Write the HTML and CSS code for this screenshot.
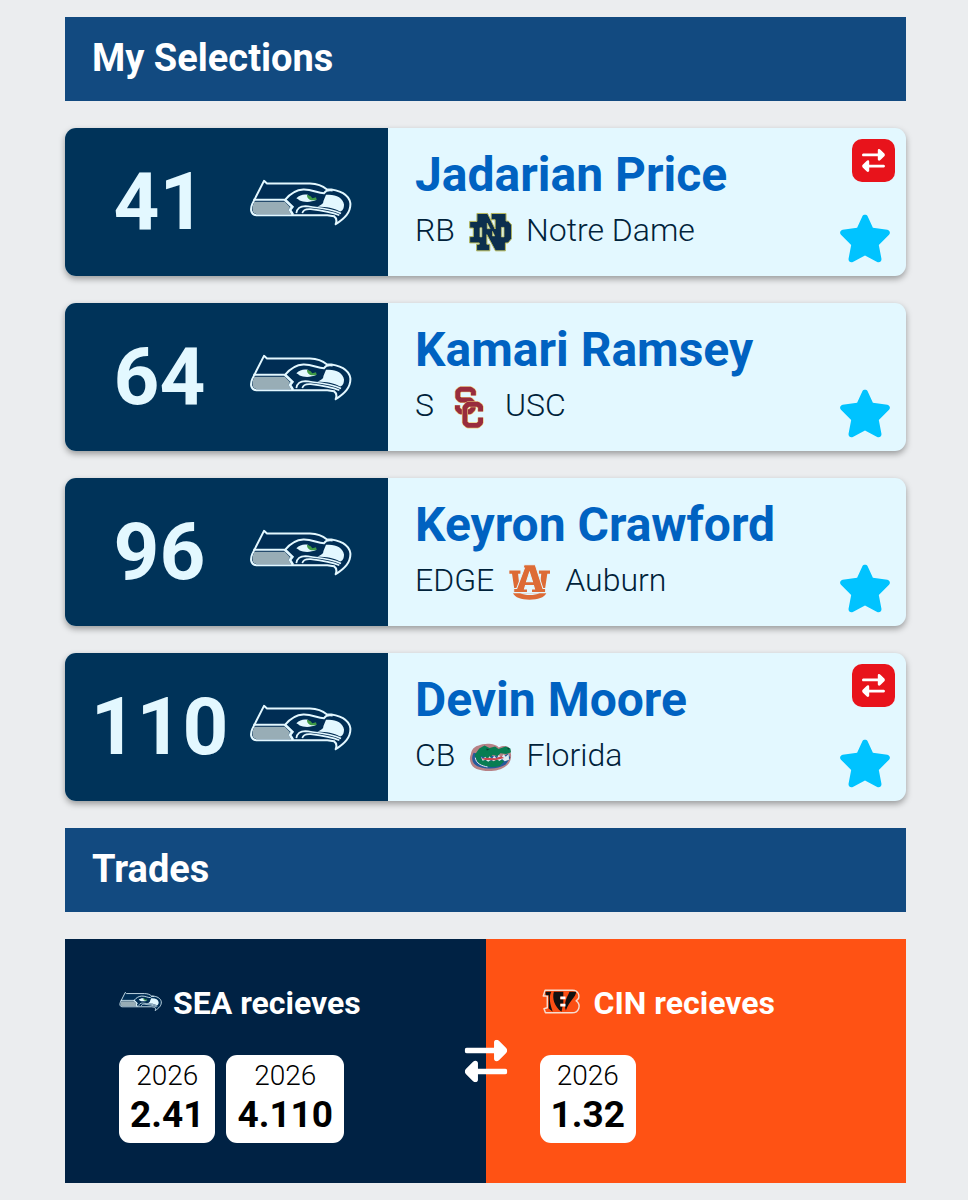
FILE: index.html
```
<!DOCTYPE html>
<html lang="en">
<head>
    <meta charset="UTF-8">
    <meta name="viewport" content="width=device-width, initial-scale=1.0">
    <title>My Selections</title>
    <link rel="stylesheet" href="styles.css">
</head>
<body>
    <!-- Shared icons and team logos -->
    <svg class="sprite" aria-hidden="true">
        <symbol id="sea" viewBox="27 40 309 140">
            <path d="M72 45L81 53H210C236 54 248 60 260 70C300 71 327 87 331 112C333 140 313 158 287 175C291 165 290 157 282 151L262 148H48C32 145 30 130 37 114Z" fill="#002d54" stroke="#e3f8ff" stroke-width="6" stroke-linejoin="round"/>
            <path d="M43 108H134L150 124L145 131L153 145H50C37 142 36 130 39 119Z" fill="#98adb6"/>
            <path d="M40 102H135C151 83 170 72 190 71C216 70 232 82 252 82C257 74 267 72 278 74" fill="none" stroke="#e3f8ff" stroke-width="6"/>
            <path d="M134 101L157 123L150 132L159 147" fill="none" stroke="#e3f8ff" stroke-width="8"/>
            <path d="M258 87C286 84 309 95 312 116C312 128 308 136 300 137C282 126 260 123 232 122C246 117 251 111 250 106Z" fill="#e3f8ff"/>
            <path d="M169 97C180 87 191 84 204 87C206 98 217 103 230 102C211 111 190 109 179 104C176 101 173 99 169 97Z" fill="#e3f8ff"/>
            <path d="M201 87L212 91L217 97L228 94L230 102C213 107 200 100 201 87Z" fill="#3f9b45"/>
            <path d="M169 142C171 128 181 121 196 121C234 126 273 128 303 143M187 142C189 132 198 129 212 130C245 134 270 137 298 148" fill="none" stroke="#e3f8ff" stroke-width="5"/>
        </symbol>
        <symbol id="cin" viewBox="20 37 118 66">
            <path d="M34 39H109C127 39 133 60 119 68C135 80 126 101 108 101H35L31 90L40 87V55H29Z" fill="#fb4f14" stroke="#f6ddd0" stroke-width="4" stroke-linejoin="round"/>
            <path d="M35 43H51C43 58 48 78 55 98L44 89V53H36ZM58 43H84V57H75V64H84V76H75V83H82L79 98C59 83 53 62 58 43ZM101 43H119C119 58 100 68 91 95C84 74 94 59 101 43Z" fill="#111"/>
            <path d="M76 56H90V64H76ZM76 76H90V84H76Z" fill="#fff"/>
        </symbol>
        <symbol id="nd" viewBox="27 40 130 117">
            <path d="M51 41H83L106 88V60H94V41H139V64H146L156 76V117L145 130H137V154H107L81 105V134H90V154H50V134H58V130H29V111H40V85H29V65H51Z" fill="#0c2f4e" stroke="#b7b85a" stroke-width="3"/>
            <path d="M60 84H66V112H60ZM125 83H133V112H125ZM82 70L91 87H82ZM105 109L98 95V109Z" fill="#d8edd7" stroke="#b7b85a" stroke-width="2"/>
        </symbol>
        <symbol id="usc" viewBox="28 18 92 132">
            <g fill="none" stroke-linejoin="bevel">
                <path d="M86 47V34L77 28H46L38 35V53L46 61H76L85 70V88L76 97H46L37 88V77" stroke="#efca78" stroke-width="19"/>
                <path d="M86 47V34L77 28H46L38 35V53L46 61H76L85 70V88L76 97H46L37 88V77" stroke="#982c3d" stroke-width="15"/>
                <path d="M108 96V81L99 74H69L60 84V131L69 139H99L108 131V115" stroke="#efca78" stroke-width="19"/>
                <path d="M108 96V81L99 74H69L60 84V131L69 139H99L108 131V115" stroke="#982c3d" stroke-width="15"/>
            </g>
        </symbol>
        <symbol id="auburn" viewBox="26 30 128 106">
            <path d="M30 47H63V57H56L61 104H45L38 57H30ZM118 47H151V57H143L136 104H120L125 57H118Z" fill="#dd6b35"/>
            <path d="M41 115H140C134 128 115 134 90 134C65 134 47 128 41 115Z" fill="#dd6b35"/>
            <path d="M62 115H120C105 122 77 122 62 115Z" fill="#e3f8ff"/>
            <path d="M74 30H107L130 101H138V113H96V102H105L102 92H78L75 102H84V113H43V101H52L75 40H71ZM90 53L81 81H99Z" fill="#dd6b35" stroke="#e3f8ff" stroke-width="3" fill-rule="evenodd"/>
        </symbol>
        <symbol id="florida" viewBox="26 29 130 87">
            <path d="M53 37C70 28 105 28 116 42C136 32 153 40 151 55C157 69 151 91 138 98C116 117 73 116 49 107C31 100 24 78 32 61C34 48 43 39 53 37Z" fill="#b78186"/>
            <path d="M40 58C30 78 38 96 58 101C83 109 114 108 137 94L151 73L144 61L126 70L80 66Z" fill="#255a9b"/>
            <path d="M57 45L73 36L88 44L105 39L115 47L137 39L151 45L153 57L138 62L121 60L112 69L98 64L87 76L61 68L65 80L95 82L117 77L133 84L119 98C91 105 60 99 51 85L43 65Z" fill="#087d52"/>
            <path d="M62 70L69 77L75 70L82 78L88 69L95 78L102 67L110 76L116 65L124 72L131 63L137 70L146 62L147 79L134 84L126 77L118 83L110 78L101 84L93 79L84 85L76 79L67 82Z" fill="#ddecf0"/>
            <path d="M63 76L78 73L106 75L123 69L132 74L106 81L75 80Z" fill="#ca4750"/>
            <path d="M78 45L88 48L80 51ZM142 43L148 45L144 49Z" fill="#083e30"/>
            <path d="M45 73C47 91 65 98 82 101" fill="none" stroke="#e5e5ee" stroke-width="3"/>
        </symbol>
        <symbol id="swap" viewBox="41 191 131 131">
            <path d="M48 216H131V199C131 191 140 189 146 195L168 217C172 221 172 228 168 232L146 254C140 260 131 258 131 250V233H48C39 233 39 216 48 216ZM165 280H82V263C82 255 73 253 67 259L45 281C41 285 41 292 45 296L67 318C73 324 82 322 82 314V297H165C174 297 174 280 165 280Z" fill="currentColor"/>
        </symbol>
        <symbol id="star" viewBox="29 280 152 147">
            <path d="M97 286C100 280 110 280 113 286L129 321L173 327C181 329 183 337 178 342L147 373L155 415C156 423 149 428 142 425L105 405L68 425C61 428 54 423 55 415L63 373L32 342C27 337 29 329 37 327L81 321Z" fill="currentColor"/>
        </symbol>
    </svg>

    <main class="page">
        <h2 class="section-title">My Selections</h2>

        <article class="pick">
            <div class="pick-slot">
                <span class="pick-number">41</span>
                <svg class="team-logo" role="img" aria-label="Seattle"><use href="#sea"/></svg>
            </div>
            <div class="pick-info">
                <h3 class="player-name">Jadarian Price</h3>
                <div class="player-meta">
                    <span>RB</span>
                    <svg class="school-logo" aria-hidden="true"><use href="#nd"/></svg>
                    <span>Notre Dame</span>
                </div>
            </div>
            <div class="pick-actions">
                <button class="trade-button" aria-label="View trade"><svg><use href="#swap"/></svg></button>
                <button class="star-button" aria-label="Favorite"><svg><use href="#star"/></svg></button>
            </div>
        </article>

        <article class="pick">
            <div class="pick-slot">
                <span class="pick-number">64</span>
                <svg class="team-logo" role="img" aria-label="Seattle"><use href="#sea"/></svg>
            </div>
            <div class="pick-info">
                <h3 class="player-name">Kamari Ramsey</h3>
                <div class="player-meta">
                    <span>S</span>
                    <svg class="school-logo" aria-hidden="true"><use href="#usc"/></svg>
                    <span>USC</span>
                </div>
            </div>
            <div class="pick-actions">
                <button class="star-button" aria-label="Favorite"><svg><use href="#star"/></svg></button>
            </div>
        </article>

        <article class="pick">
            <div class="pick-slot">
                <span class="pick-number">96</span>
                <svg class="team-logo" role="img" aria-label="Seattle"><use href="#sea"/></svg>
            </div>
            <div class="pick-info">
                <h3 class="player-name">Keyron Crawford</h3>
                <div class="player-meta">
                    <span>EDGE</span>
                    <svg class="school-logo" aria-hidden="true"><use href="#auburn"/></svg>
                    <span>Auburn</span>
                </div>
            </div>
            <div class="pick-actions">
                <button class="star-button" aria-label="Favorite"><svg><use href="#star"/></svg></button>
            </div>
        </article>

        <article class="pick">
            <div class="pick-slot">
                <span class="pick-number">110</span>
                <svg class="team-logo" role="img" aria-label="Seattle"><use href="#sea"/></svg>
            </div>
            <div class="pick-info">
                <h3 class="player-name">Devin Moore</h3>
                <div class="player-meta">
                    <span>CB</span>
                    <svg class="school-logo" aria-hidden="true"><use href="#florida"/></svg>
                    <span>Florida</span>
                </div>
            </div>
            <div class="pick-actions">
                <button class="trade-button" aria-label="View trade"><svg><use href="#swap"/></svg></button>
                <button class="star-button" aria-label="Favorite"><svg><use href="#star"/></svg></button>
            </div>
        </article>

        <h2 class="section-title">Trades</h2>

        <section class="trade">
            <div class="trade-side sea">
                <h3 class="trade-team">
                    <svg class="trade-logo" aria-hidden="true"><use href="#sea"/></svg>
                    SEA recieves
                </h3>
                <div class="assets">
                    <div class="asset"><span class="asset-year">2026</span><strong>2.41</strong></div>
                    <div class="asset"><span class="asset-year">2026</span><strong>4.110</strong></div>
                </div>
            </div>
            <div class="trade-side cin">
                <h3 class="trade-team">
                    <svg class="trade-logo" aria-hidden="true"><use href="#cin"/></svg>
                    CIN recieves
                </h3>
                <div class="assets">
                    <div class="asset"><span class="asset-year">2026</span><strong>1.32</strong></div>
                </div>
            </div>
            <svg class="trade-arrows" aria-hidden="true"><use href="#swap"/></svg>
        </section>
    </main>
</body>
</html>
```
FILE: styles.css
```
* {
    box-sizing: border-box;
}

body {
    margin: 0;
    background: #ebedef;
    font-family: Roboto, "Liberation Sans", sans-serif;
    color: #00223a;
}

h2, h3 {
    margin: 0;
}

.sprite {
    display: none;
}

.page {
    display: flex;
    flex-direction: column;
    gap: 27px;
    padding: 17px 62px 16px 65px;
}

.section-title {
    padding: 17px 27px 19px;
    background: #124a80;
    color: #fff;
    font-size: 38px;
    line-height: 48px;
    font-weight: 700;
}

/* Selections */
.pick {
    display: flex;
    min-height: 148px;
    border-radius: 11px;
    overflow: hidden;
    background: #e3f8ff;
    box-shadow: 0 3px 6px rgba(0, 0, 0, 0.35);
}

.pick-slot {
    flex: 0 0 323px;
    display: flex;
    align-items: center;
    padding: 0 36px 0 5px;
    background: #003359;
}

.pick-number {
    flex: 1;
    text-align: center;
    color: #e3f8ff;
    font-size: 80px;
    line-height: 96px;
    font-weight: 700;
}

.team-logo {
    width: 103px;
    height: 47px;
}

.pick-info {
    flex: 1;
    padding: 19px 0 17px 27px;
}

.player-name {
    color: #0062c1;
    font-size: 48px;
    line-height: 56px;
    font-weight: 700;
}

.player-meta {
    display: flex;
    align-items: center;
    gap: 14px;
    height: 54px;
    font-size: 32px;
    font-weight: 300;
}

.school-logo {
    width: 43px;
    height: 43px;
    margin-top: 4px;
}

.pick-actions {
    display: flex;
    flex-direction: column;
    align-items: flex-end;
    padding: 11px;
}

.pick-actions button {
    display: flex;
    align-items: center;
    justify-content: center;
    padding: 0;
    border: none;
    cursor: pointer;
}

.trade-button {
    width: 43px;
    height: 43px;
    border-radius: 10px;
    background: #e8131b;
    color: #fff;
}

.trade-button svg {
    width: 23px;
    height: 23px;
}

.star-button {
    width: 60px;
    height: 54px;
    margin-top: auto;
    background: none;
    color: #00c3ff;
}

.star-button svg {
    width: 50px;
    height: 49px;
}

/* Trades */
.trade {
    position: relative;
    display: grid;
    grid-template-columns: 1fr 1fr;
}

.trade-side {
    padding: 40px 54px;
    color: #fff;
}

.sea {
    background: #002244;
}

.cin {
    background: #ff5214;
}

.trade-team {
    display: flex;
    align-items: center;
    gap: 11px;
    margin-bottom: 28px;
    font-size: 32px;
    line-height: 48px;
    font-weight: 700;
}

.trade-logo {
    width: 43px;
    height: 27px;
    margin-bottom: 4px;
}

.assets {
    display: flex;
    gap: 11px;
}

.asset {
    display: flex;
    flex-direction: column;
    align-items: center;
    padding: 5px 11px;
    border-radius: 11px;
    background: #fff;
    color: #000;
}

.asset-year {
    font-size: 28px;
    line-height: 32px;
    font-weight: 300;
}

.asset strong {
    font-size: 37px;
    line-height: 46px;
    font-weight: 700;
}

.trade-arrows {
    position: absolute;
    top: 50%;
    left: 50%;
    width: 43px;
    height: 43px;
    transform: translate(-50%, -50%);
    color: #fff;
}
```
